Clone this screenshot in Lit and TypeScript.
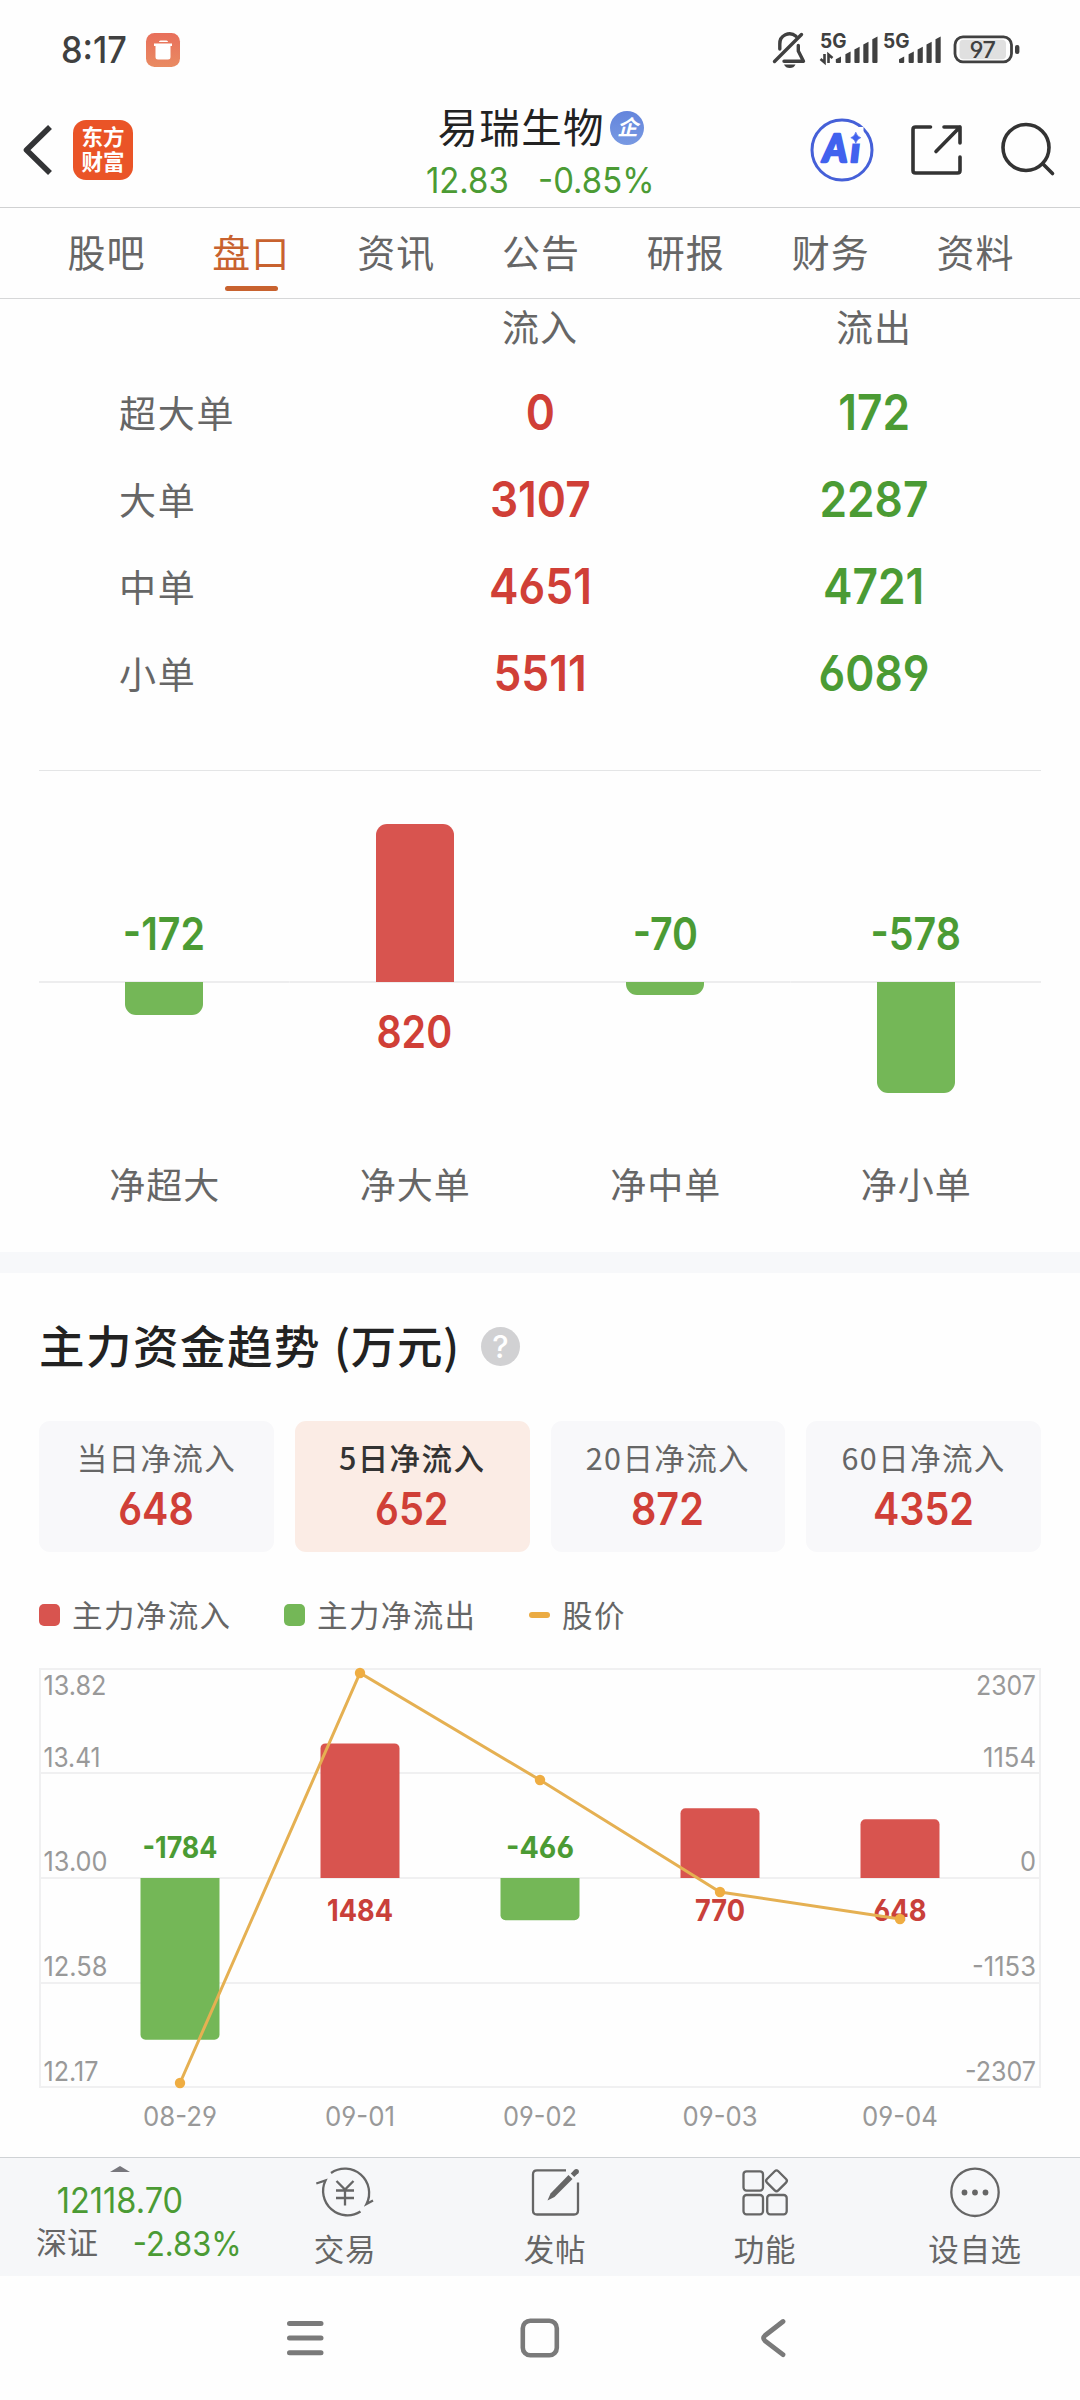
import { LitElement, html, svg, css } from "lit";
import { customElement } from "lit/decorators.js";

const TABS = ["股吧", "盘口", "资讯", "公告", "研报", "财务", "资料"];

const ORDERS = [
  { label: "超大单", inflow: 0, outflow: 172 },
  { label: "大单", inflow: 3107, outflow: 2287 },
  { label: "中单", inflow: 4651, outflow: 4721 },
  { label: "小单", inflow: 5511, outflow: 6089 },
];

const NETS = [
  { label: "净超大", value: -172 },
  { label: "净大单", value: 820 },
  { label: "净中单", value: -70 },
  { label: "净小单", value: -578 },
];
const NET_SCALE = 158 / 820;

const PERIODS = [
  { label: "当日净流入", value: 648 },
  { label: "5日净流入", value: 652 },
  { label: "20日净流入", value: 872 },
  { label: "60日净流入", value: 4352 },
];

const DAYS = [
  { date: "08-29", value: -1784, y: 428, w: 75, dw: 74 },
  { date: "09-01", value: 1484, y: 18, w: 66, dw: 70 },
  { date: "09-02", value: -466, y: 125, w: 68, dw: 74 },
  { date: "09-03", value: 770, y: 237, w: 50, dw: 75 },
  { date: "09-04", value: 648, y: 264, w: 53, dw: 76 },
];
const AXIS = [
  { price: "13.82", pw: 63, flow: "2307", fw: 60, y: 30.5 },
  { price: "13.41", pw: 57, flow: "1154", fw: 53, y: 102 },
  { price: "13.00", pw: 64, flow: "0", fw: 16, y: 206.5 },
  { price: "12.58", pw: 64, flow: "-1153", fw: 64, y: 311 },
  { price: "12.17", pw: 55, flow: "-2307", fw: 71, y: 416.5 },
];

@customElement("app-root")
export class AppRoot extends LitElement {
  static styles = css`
    :host {
      display: block;
      width: 1080px;
      height: 2400px;
      overflow: hidden;
      background: #fefefe;
      color: #666;
      font-family: "Noto Sans CJK SC", "Noto Sans", sans-serif;
      --red: #d03f37;
      --green: #4b9b34;
      --bar-red: #d8544f;
      --bar-green: #74b757;
    }
    * { box-sizing: border-box; }
    svg { display: block; flex: none; overflow: visible; }
    .red { color: var(--red); }
    .green { color: var(--green); }
    .digits { font-family: Inter, "Noto Sans CJK SC", sans-serif; font-feature-settings: "cv03", "cv04"; }
    .num { display: inline-block; transform: scaleX(0.91); }

    .status { height: 100px; display: flex; align-items: center; padding: 0 50px 0 61px; }
    .time { font-size: 36.5px; line-height: 40px; width: 85px; color: #404040; font-weight: 500; }
    .time .num { transform: scaleX(0.94); transform-origin: left; }
    .status-right { margin-left: auto; }

    .header { height: 108px; border-bottom: 1px solid #d0d1d2; display: grid; grid-template-columns: 300px 1fr 300px; }
    .side { display: flex; align-items: center; padding-bottom: 10px; }
    .left { padding-left: 20px; gap: 19px; }
    .right { justify-content: flex-end; padding-right: 23px; gap: 37px; }
    .ai { margin-right: -2px; }
    .logo { width: 60px; height: 60px; border-radius: 13px; background: #ea5427; color: #fff; font-weight: 700; font-size: 21.5px; line-height: 25.5px; padding-top: 3px; text-align: center; }
    .name { height: 52px; display: flex; align-items: center; justify-content: center; gap: 7px; padding-left: 2px; font-size: 40.5px; line-height: 52px; color: #222; }
    .name-text { letter-spacing: 1.3px; margin-right: -1.3px; }
    .badge { width: 34px; height: 34px; border-radius: 50%; background: linear-gradient(#6485dc, #7899e2); color: #fff; font-size: 21px; line-height: 31px; font-weight: 700; font-style: italic; text-align: center; margin-top: 4px; }
    .quote { display: flex; justify-content: center; gap: 22px; padding-left: 2px; font-size: 35.2px; line-height: 57px; color: var(--green); }
    .quote .num { transform: scaleX(0.935); }

    .tabs { height: 91px; padding: 8px 32px 0 34px; border-bottom: 1px solid #d6d7d8; display: flex; }
    .tab { flex: 1; display: flex; flex-direction: column; align-items: center; font-size: 38px; line-height: 70px; letter-spacing: 1px; }
    .tab.on { color: #c8622f; }
    .tab.on::after { content: ""; width: 53px; height: 5px; border-radius: 3px; background: #c8622f; }

    .orders { margin: 0 39px; border-bottom: 1px solid #e4e5e6; padding-bottom: 58px; }
    .row { display: grid; grid-template-columns: repeat(3, 1fr); height: 87px; align-items: center; text-align: center; }
    .row.head { height: 52px; margin-bottom: 13px; font-size: 37px; letter-spacing: 1px; }
    .row-label { text-align: left; padding: 8px 0 0 80px; font-size: 37px; letter-spacing: 1.8px; }
    .row-value { font-size: 49.5px; font-weight: 600; line-height: 60px; padding-top: 8px; }
    .row-value .num { transform: scaleX(0.895); }

    .nets { margin: 0 39px; height: 481px; display: flex; }
    .net { flex: 1; text-align: center; }
    .up, .down { display: flex; flex-direction: column; align-items: center; background: linear-gradient(#ededee, #ededee) no-repeat; background-size: 100% 1px; }
    .up { height: 211px; justify-content: flex-end; background-position: bottom; }
    .down { height: 175px; background-position: top; }
    .net-bar { width: 78px; }
    .up .net-bar { border-radius: 11px 11px 0 0; background: var(--bar-red); }
    .down .net-bar { border-radius: 0 0 11px 11px; background: var(--bar-green); }
    .net-value { font-size: 45px; font-weight: 600; line-height: 60px; }
    .net-value .num { transform: scaleX(0.875); }
    .up .net-value { padding-bottom: 18px; }
    .down .net-value { padding-top: 20px; }
    .net-label { font-size: 36px; line-height: 50px; letter-spacing: 1px; padding: 1px 0 0 1px; }

    .band { height: 21px; background: #f7f8fa; }

    .trend { padding: 41px 39px 0; }
    .title { height: 60px; display: flex; align-items: center; color: #222; font-size: 45.5px; font-weight: 500; line-height: 60px; }
    .title-main { letter-spacing: 1.5px; }
    .title-unit { margin-left: 13px; letter-spacing: 0.6px; }
    .help { width: 39px; height: 39px; border-radius: 50%; background: #d1d1d3; color: #fff; font-size: 31px; font-weight: 500; line-height: 39px; text-align: center; margin: 4px 0 0 21px; }
    .cards { margin-top: 47px; display: grid; grid-template-columns: repeat(4, 1fr); gap: 21px; }
    .card { height: 131px; border-radius: 11px; background: #f8f8fa; padding-top: 16px; text-align: center; }
    .card.on { background: #fbece5; }
    .card-label { font-size: 30.5px; line-height: 40px; letter-spacing: 1.4px; }
    .card.on .card-label { color: #333; font-weight: 500; }
    .card-value { margin-top: 10px; font-size: 45px; line-height: 44px; font-weight: 600; color: var(--red); }
    .card-value .num { transform: scaleX(0.88); }

    .legend { margin: 43px 0 20px; height: 40px; display: flex; align-items: center; font-size: 30.5px; line-height: 40px; }
    .key { display: flex; align-items: center; gap: 12px; margin-right: 52.5px; }
    .key-text { letter-spacing: 1.4px; padding-bottom: 3px; }
    .swatch { width: 21px; height: 22px; border-radius: 5px; background: var(--bar-red); }
    .swatch.out { background: var(--bar-green); }
    .swatch.price { height: 6px; border-radius: 3px; background: #ebab42; }

    .axis { font-size: 26.5px; fill: #999; }
    .day-value { font-size: 30px; font-weight: 700; }

    .bottom { height: 119px; border-top: 1px solid #cfd2d5; background: #f6f7f9; display: flex; }
    .index { width: 240px; display: flex; flex-direction: column; align-items: center; padding-top: 8px; color: var(--green); }
    .index-value { font-size: 35px; line-height: 36px; margin-top: 10px; }
    .index-value .num { transform: scaleX(0.93); }
    .index-row { width: 100%; display: flex; justify-content: space-between; padding-left: 36px; margin-top: 3px; line-height: 40px; }
    .index-name { color: #666; font-size: 31px; }
    .index-pct { font-size: 34px; line-height: 45px; margin-right: -2px; }
    .index-pct .num { transform-origin: right; }
    .action { flex: 1; display: flex; flex-direction: column; align-items: center; gap: 6px; padding-top: 4px; font-size: 30.5px; line-height: 40px; letter-spacing: 0.7px; }
    .sysnav { height: 124px; display: flex; justify-content: center; align-items: center; gap: 174px; }
  `;

  private num(v: number | string) {
    return html`<span class="num">${v}</span>`;
  }

  private statusIcons() {
    const bars = [[65.8, 26.7], [75.4, 21.7], [84.4, 17], [93.3, 12], [102.3, 6.7]];
    const signal = (dx: number) => bars.map(([x, y]) => svg`
      <path d="M${x + dx} ${y + 2.5}l5.2 -2.8V32q0 1 -1 1h-3.2q-1 0 -1 -1z" fill="#404040"></path>`);
    return html`<svg width="260" height="40" viewBox="0 0 260 40" fill="none" stroke="#404040">
      <g stroke-width="3.4" stroke-linecap="round" stroke-linejoin="round">
        <path d="M4.5 31.5L31.5 4.5"></path>
        <path d="M9.8 19V14A9.8 9.8 0 0 1 26 6.2M28.3 15.5V21L33.5 31.2H14"></path>
      </g>
      <path d="M14 34.5h11.5q-1.5 3.5 -5.7 3.5t-5.8 -3.5z" fill="#404040" stroke="none"></path>
      <g class="digits" fill="#404040" stroke="none" font-weight="700" font-size="20">
        <text x="50" y="18.4" textLength="26.5" lengthAdjust="spacingAndGlyphs">5G</text>
        <text x="113" y="18.4" textLength="26.5" lengthAdjust="spacingAndGlyphs">5G</text>
      </g>
      <path d="M54.5 24v8.5L50.5 29M58.5 33V24.5L62.5 28" stroke-width="2.6"></path>
      <g stroke="none">${signal(0)}${signal(63.2)}</g>
      <rect x="189.5" y="9.7" width="46.5" height="19.6" rx="4" fill="#e0e0e0" stroke="none"></rect>
      <rect x="185" y="6.8" width="56.5" height="25" rx="8" stroke-width="2.8"></rect>
      <rect x="245" y="15" width="4.4" height="9" rx="2" fill="#404040" stroke="none"></rect>
      <text class="digits" x="199.5" y="27.8" font-size="22.5" font-weight="500" textLength="26.5" lengthAdjust="spacingAndGlyphs" fill="#404040" stroke="none">97</text>
    </svg>`;
  }

  private chart() {
    const zero = 223;
    const rows = [14, 118, 223, 328, 432];
    return html`<svg width="1002" height="502" viewBox="0 0 1002 502">
      <g stroke="#f0f0f1" stroke-width="2" fill="none">
        ${rows.map((y) => svg`<path d="M0 ${y}H1002"></path>`)}
        <path d="M1 14V432M1001 14V432"></path>
      </g>
      ${AXIS.map((a) => svg`
        <text class="axis digits" x="4.5" y=${a.y + 9.7} textLength=${a.pw} lengthAdjust="spacingAndGlyphs">${a.price}</text>
        <text class="axis digits" x=${997 - a.fw} y=${a.y + 9.7} textLength=${a.fw} lengthAdjust="spacingAndGlyphs">${a.flow}</text>`)}
      ${DAYS.map((d, i) => {
        const cx = 141 + i * 180;
        const h = Math.abs(d.value) * 0.0907;
        const s = d.value > 0 ? -1 : 1;
        const sweep = d.value > 0 ? 1 : 0;
        const end = zero + s * h;
        return svg`
          <path d="M${cx - 39.5} ${zero}V${end - s * 5}a5 5 0 0 ${sweep} 5 ${s * 5}h69a5 5 0 0 ${sweep} 5 ${-s * 5}V${zero}z" fill=${s < 0 ? "#d8544f" : "#74b757"}></path>
          <text class="day-value digits" x=${cx - d.w / 2} y=${s < 0 ? 266 : 202.5} textLength=${d.w} lengthAdjust="spacingAndGlyphs" fill=${s < 0 ? "#c9403a" : "#4b9b34"}>${d.value}</text>
          <text class="axis digits" x=${cx - d.dw / 2} y="471" textLength=${d.dw} lengthAdjust="spacingAndGlyphs">${d.date}</text>`;
      })}
      <polyline points=${DAYS.map((d, i) => `${141 + i * 180},${d.y}`).join(" ")} fill="none" stroke="#e5b052" stroke-width="3"></polyline>
      ${DAYS.map((d, i) => svg`<circle cx=${141 + i * 180} cy=${d.y} r="5.2" fill="#efad42"></circle>`)}
    </svg>`;
  }

  private action(label: string, icon: unknown) {
    return html`<div class="action">
      <svg width="60" height="60" viewBox="0 0 60 60" fill="none" stroke="#666" stroke-width="2.3">${icon}</svg>
      <span>${label}</span>
    </div>`;
  }

  render() {
    return html`
      <div class="status">
        <span class="time digits">${this.num("8:17")}</span>
        <svg width="34" height="34" viewBox="0 0 34 34">
          <defs><linearGradient id="g" x2="0" y2="1"><stop stop-color="#e86f5b"></stop><stop offset="1" stop-color="#e98b62"></stop></linearGradient></defs>
          <rect width="34" height="34" rx="8.5" fill="url(#g)"></rect>
          <path d="M13 9q0 -1.5 1.5 -1.5h6q1.5 0 1.5 1.5zM8 10.5h18v2.5h-1.5V24q0 2.5 -2.5 2.5h-10q-2.5 0 -2.5 -2.5V13H8z" fill="#fff"></path>
        </svg>
        <div class="status-right">${this.statusIcons()}</div>
      </div>

      <div class="header">
        <div class="side left">
          <svg width="34" height="54" viewBox="0 0 34 54" fill="none" stroke="#333436" stroke-width="5.6"><path d="M30 4L6.5 27L30 50" stroke-linejoin="round"></path></svg>
          <div class="logo">东方<br>财富</div>
        </div>
        <div>
          <div class="name"><span class="name-text">易瑞生物</span><span class="badge">企</span></div>
          <div class="quote digits">${this.num("12.83")}${this.num("-0.85%")}</div>
        </div>
        <div class="side right">
          <svg class="ai" width="66" height="66" viewBox="0 0 66 66">
            <circle cx="33" cy="33" r="30" fill="none" stroke="#4560d8" stroke-width="3"></circle>
            <text x="14" y="45" font-family="Lato" font-weight="900" font-style="italic" font-size="37" textLength="37" fill="#4162ee" stroke="#4162ee" stroke-width="2.4" stroke-linejoin="round">Ai</text>
            <rect x="40.5" y="10" width="14" height="16.5" fill="#fefefe"></rect>
            <path d="M46.8 15.2q1.2 4.3 5 5.5q-3.8 1.2 -5 5.5q-1.2 -4.3 -5 -5.5q3.8 -1.2 5 -5.5z" fill="#4162ee" stroke="#4162ee" stroke-width="0.6"></path>
          </svg>
          <svg width="54" height="54" viewBox="0 0 54 54" fill="none" stroke="#333" stroke-width="3.6" stroke-linecap="round" stroke-linejoin="round">
            <path d="M20.5 4H5.5Q3 4 3 6.5V47.5Q3 50 5.5 50H47.5Q50 50 50 47.5V34M34 4H50V20M50 4L26 28.5"></path>
          </svg>
          <svg width="56" height="56" viewBox="0 0 56 56" fill="none" stroke="#333" stroke-width="3.6" stroke-linecap="round">
            <circle cx="25" cy="25.5" r="23"></circle><path d="M42 42L51.5 51.5"></path>
          </svg>
        </div>
      </div>

      <div class="tabs">${TABS.map((t) => html`<div class="tab ${t === "盘口" ? "on" : ""}">${t}</div>`)}</div>

      <div class="orders">
        <div class="row head"><span></span><span>流入</span><span>流出</span></div>
        ${ORDERS.map((o) => html`<div class="row">
          <span class="row-label">${o.label}</span>
          <span class="row-value digits red">${this.num(o.inflow)}</span>
          <span class="row-value digits green">${this.num(o.outflow)}</span>
        </div>`)}
      </div>

      <div class="nets">
        ${NETS.map((d) => {
          const up = d.value > 0;
          const bar = html`<div class="net-bar" style="height:${Math.abs(d.value) * NET_SCALE}px"></div>`;
          const value = html`<div class="net-value digits ${up ? "red" : "green"}">${this.num(d.value)}</div>`;
          return html`<div class="net">
            <div class="up">${up ? bar : value}</div>
            <div class="down">${up ? value : bar}</div>
            <div class="net-label">${d.label}</div>
          </div>`;
        })}
      </div>

      <div class="band"></div>

      <div class="trend">
        <div class="title"><span class="title-main">主力资金趋势</span><span class="title-unit">(万元)</span><span class="help digits">?</span></div>
        <div class="cards">
          ${PERIODS.map((p, i) => html`<div class="card ${i === 1 ? "on" : ""}">
            <div class="card-label">${p.label}</div>
            <div class="card-value digits">${this.num(p.value)}</div>
          </div>`)}
        </div>
        <div class="legend">
          <div class="key"><span class="swatch"></span><span class="key-text">主力净流入</span></div>
          <div class="key"><span class="swatch out"></span><span class="key-text">主力净流出</span></div>
          <div class="key"><span class="swatch price"></span><span class="key-text">股价</span></div>
        </div>
        ${this.chart()}
      </div>

      <div class="bottom">
        <div class="index">
          <svg width="20" height="6" viewBox="0 0 20 6"><path d="M0 6L10 0L20 6z" fill="#77777d"></path></svg>
          <div class="index-value digits">${this.num("12118.70")}</div>
          <div class="index-row"><span class="index-name">深证</span><span class="index-pct digits">${this.num("-2.83%")}</span></div>
        </div>
        ${this.action("交易", svg`
          <path d="M16 11A24.3 24.3 0 0 1 51.5 42L58 38.5"></path>
          <path d="M1.3 21.5L10.5 18.5A24.3 24.3 0 0 0 45.5 49.5"></path>
          <path d="M21.5 19L30 27.5L38.5 19M30 27.5V43.5M21 28.5H39M21 36H39"></path>`)}
        ${this.action("发帖", svg`
          <path d="M41 8.3H12Q8 8.3 8 12.3V48.5Q8 52.5 12 52.5H49Q53 52.5 53 48.5V20.5"></path>
          <path d="M22.5 38.5L25.5 31.5L43.5 13L47.5 17L29.5 35z" fill="#666" stroke="none"></path>
          <path d="M47.5 13.3L51 9.8" stroke-width="5"></path><circle cx="51.3" cy="9.6" r="2.6" fill="#666" stroke="none"></circle>`)}
        ${this.action("功能", svg`
          <rect x="8.5" y="9.3" width="19.5" height="19.3" rx="3"></rect>
          <rect x="8.5" y="33" width="19.5" height="19.3" rx="3"></rect>
          <rect x="32.2" y="33" width="19.5" height="19.3" rx="3"></rect>
          <rect x="33.5" y="10.8" width="16" height="16" rx="2.5" transform="rotate(45 41.5 18.8)"></rect>`)}
        ${this.action("设自选", svg`
          <circle cx="30" cy="30.3" r="23.7"></circle>
          <g fill="#666" stroke="none"><circle cx="19.5" cy="30.5" r="2.9"></circle><circle cx="30" cy="30.5" r="2.9"></circle><circle cx="40.5" cy="30.5" r="2.9"></circle></g>`)}
      </div>

      <div class="sysnav">
        <svg width="60" height="60" viewBox="0 0 60 60" stroke="#7a7a7a" stroke-width="5" stroke-linecap="round"><path d="M13.5 15.5H45M13.5 30H45M13.5 44.7H45"></path></svg>
        <svg width="60" height="60" viewBox="0 0 60 60" fill="none" stroke="#7a7a7a" stroke-width="4.6"><rect x="12.8" y="12.8" width="34" height="34.5" rx="7.5"></rect></svg>
        <svg width="60" height="60" viewBox="0 0 60 60" fill="none" stroke="#7a7a7a" stroke-width="4.8" stroke-linecap="round" stroke-linejoin="round"><path d="M39 13.5L21 27.5Q18 30 21 32.8L39 46.7"></path></svg>
      </div>
    `;
  }
}
